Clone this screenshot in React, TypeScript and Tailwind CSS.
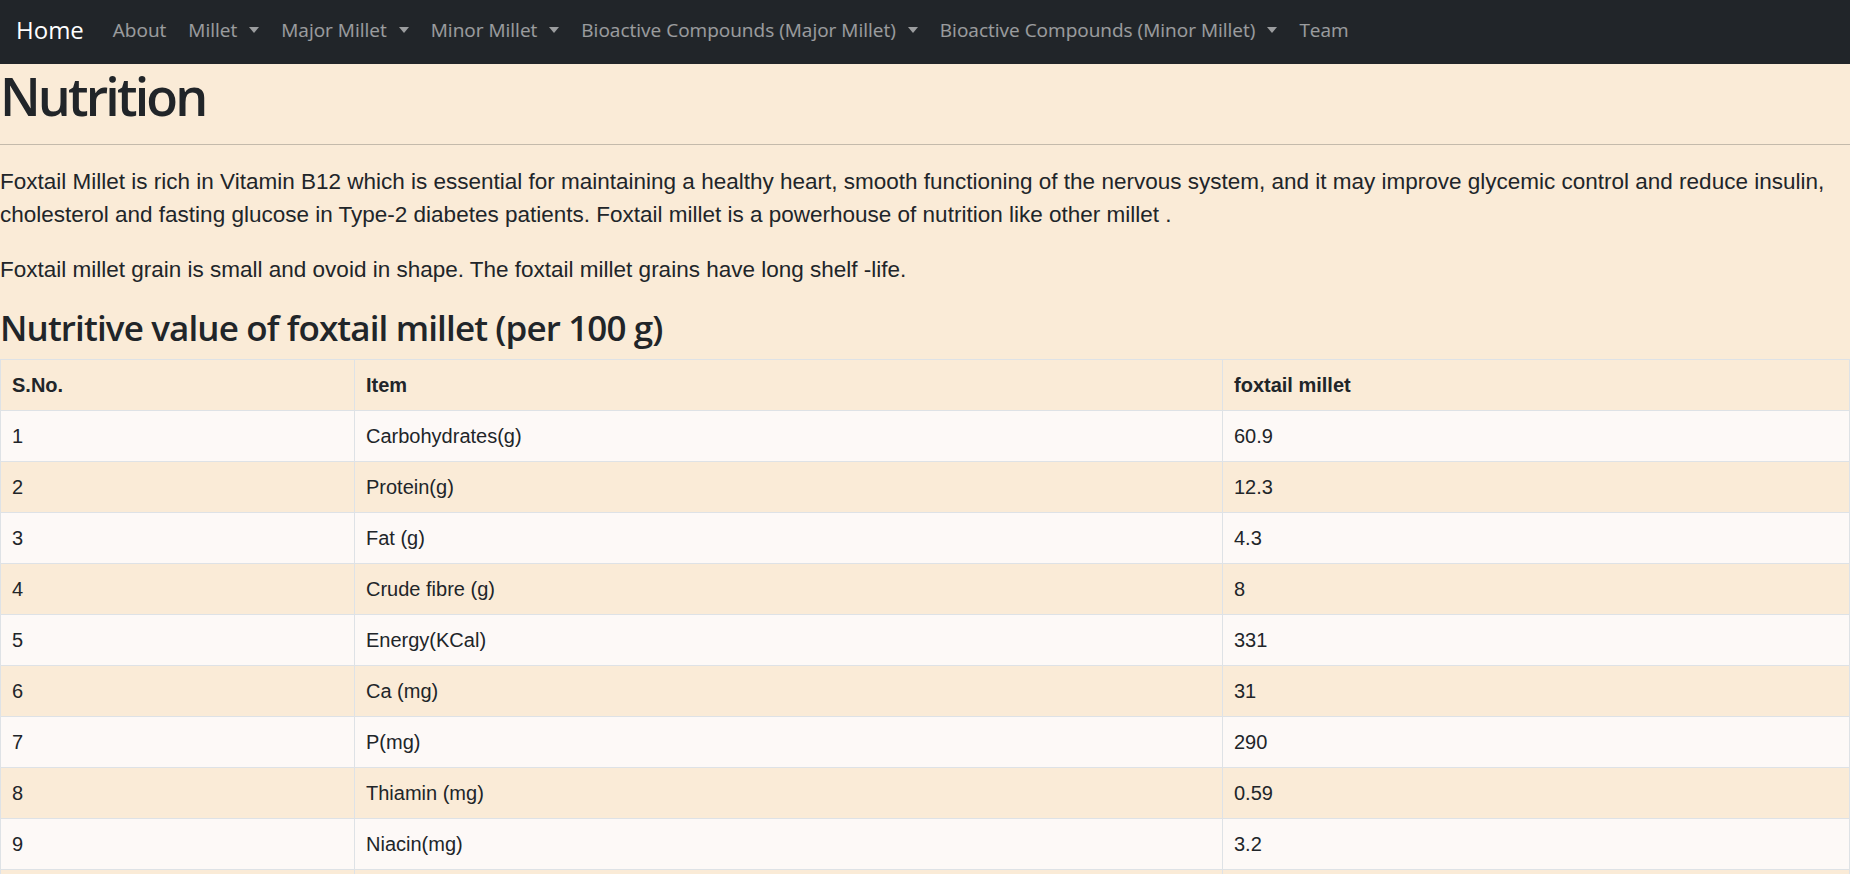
import React from 'react';

const navItems = [
  { label: 'About', caret: false },
  { label: 'Millet', caret: true },
  { label: 'Major Millet', caret: true },
  { label: 'Minor Millet', caret: true },
  { label: 'Bioactive Compounds (Major Millet)', caret: true },
  { label: 'Bioactive Compounds (Minor Millet)', caret: true },
  { label: 'Team', caret: false },
];

const rows = [
  ['1', 'Carbohydrates(g)', '60.9'],
  ['2', 'Protein(g)', '12.3'],
  ['3', 'Fat (g)', '4.3'],
  ['4', 'Crude fibre (g)', '8'],
  ['5', 'Energy(KCal)', '331'],
  ['6', 'Ca (mg)', '31'],
  ['7', 'P(mg)', '290'],
  ['8', 'Thiamin (mg)', '0.59'],
  ['9', 'Niacin(mg)', '3.2'],
  ['10', 'Iron (mg)', '2.8'],
  ['11', 'Riboflavin (mg)', '0.11'],
];

function Navbar() {
  return (
    <nav className="flex h-[64px] items-center bg-[#212529] pb-[5px] pl-4 font-['Open_Sans',sans-serif]">
      <a className="mr-[18px] text-[24px] leading-[36px] text-white">Home</a>
      <ul className="flex items-center">
        {navItems.map((item) => (
          <li key={item.label}>
            <a className="flex items-center px-[11px] text-[19px] leading-[28px] text-white/55">
              {item.label}
              {item.caret && (
                <span className="ml-[12px] inline-block h-0 w-0 border-x-[5px] border-t-[6px] border-x-transparent border-t-current" />
              )}
            </a>
          </li>
        ))}
      </ul>
    </nav>
  );
}

export default function App() {
  return (
    <div className="min-h-screen bg-[#faebd7] text-[#212529]">
      <Navbar />
      <main>
        {/* page title */}
        <h1 className="m-0 font-['Open_Sans',sans-serif] text-[52px] font-semibold leading-[64px] tracking-[-0.055em]">Nutrition</h1>
        <hr className="mt-[16px] mb-[20px] border-t border-[#c4baab]" />

        <div className="font-['Liberation_Sans',Arial,sans-serif] text-[22.5px] leading-[33px]">
          <p className="mb-[22px]">
            Foxtail Millet is rich in Vitamin B12 which is essential for maintaining a healthy heart, smooth functioning of the nervous system, and it may improve glycemic control and reduce insulin, cholesterol and fasting glucose in Type-2 diabetes patients. Foxtail millet is a powerhouse of nutrition like other millet .
          </p>
          <p>Foxtail millet grain is small and ovoid in shape. The foxtail millet grains have long shelf -life.</p>
        </div>

        <h2 className="mt-[21px] mb-[10px] font-['Open_Sans',sans-serif] text-[35px] font-semibold leading-[42px] tracking-[-0.025em]">
          Nutritive value of foxtail millet (per 100 g)
        </h2>

        <table className="w-full table-fixed border-collapse font-['Liberation_Sans',Arial,sans-serif] text-[20px] leading-[30px]">
          <colgroup>
            <col className="w-[354px]" />
            <col className="w-[868px]" />
            <col />
          </colgroup>
          <thead>
            <tr className="bg-[#faebd7]">
              <th className="border border-[#dee2e6] px-[11px] py-[10px] text-left font-bold">S.No.</th>
              <th className="border border-[#dee2e6] px-[11px] py-[10px] text-left font-bold">Item</th>
              <th className="border border-[#dee2e6] px-[11px] py-[10px] text-left font-bold">foxtail millet</th>
            </tr>
          </thead>
          <tbody>
            {rows.map((r, i) => (
              <tr key={r[0]} className={i % 2 === 0 ? 'bg-[#fdf9f7]' : 'bg-[#faebd7]'}>
                {r.map((c, j) => (
                  <td key={j} className="border border-[#dee2e6] px-[11px] py-[10px]">
                    {c}
                  </td>
                ))}
              </tr>
            ))}
          </tbody>
        </table>
      </main>
    </div>
  );
}
